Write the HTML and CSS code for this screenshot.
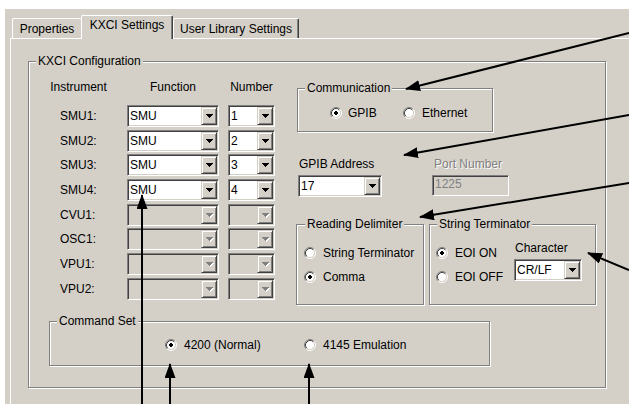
FILE: index.html
```html
<!DOCTYPE html>
<html>
<head>
<meta charset="utf-8">
<title>KXCI Settings</title>
<link rel="stylesheet" href="styles.css">
</head>
<body>
<div class="dialog">
  <div class="tabs">
    <div class="tab t1">Properties</div>
    <div class="tab t2 active">KXCI Settings</div>
    <div class="tab t3">User Library Settings</div>
  </div>
  <div class="panel">
    <div class="group kxci">
      <div class="gtitle">KXCI Configuration</div>
      <div class="kxci-main">
        <div class="inst">
          <div class="hd hd-inst">Instrument</div>
          <div class="hd hd-func">Function</div>
          <div class="hd hd-num">Number</div>

          <div class="lbl">SMU1:</div>
          <div class="combo func"><span class="val">SMU</span><span class="btn"><svg width="7" height="4" viewBox="0 0 7 4"><path d="M0 0h7v1h-1v1h-1v1h-1v1h-1v-1h-1v-1h-1v-1h-1z"/></svg></span></div>
          <div class="combo num"><span class="val">1</span><span class="btn"><svg width="7" height="4" viewBox="0 0 7 4"><path d="M0 0h7v1h-1v1h-1v1h-1v1h-1v-1h-1v-1h-1v-1h-1z"/></svg></span></div>

          <div class="lbl">SMU2:</div>
          <div class="combo func"><span class="val">SMU</span><span class="btn"><svg width="7" height="4" viewBox="0 0 7 4"><path d="M0 0h7v1h-1v1h-1v1h-1v1h-1v-1h-1v-1h-1v-1h-1z"/></svg></span></div>
          <div class="combo num"><span class="val">2</span><span class="btn"><svg width="7" height="4" viewBox="0 0 7 4"><path d="M0 0h7v1h-1v1h-1v1h-1v1h-1v-1h-1v-1h-1v-1h-1z"/></svg></span></div>

          <div class="lbl">SMU3:</div>
          <div class="combo func"><span class="val">SMU</span><span class="btn"><svg width="7" height="4" viewBox="0 0 7 4"><path d="M0 0h7v1h-1v1h-1v1h-1v1h-1v-1h-1v-1h-1v-1h-1z"/></svg></span></div>
          <div class="combo num"><span class="val">3</span><span class="btn"><svg width="7" height="4" viewBox="0 0 7 4"><path d="M0 0h7v1h-1v1h-1v1h-1v1h-1v-1h-1v-1h-1v-1h-1z"/></svg></span></div>

          <div class="lbl">SMU4:</div>
          <div class="combo func"><span class="val">SMU</span><span class="btn"><svg width="7" height="4" viewBox="0 0 7 4"><path d="M0 0h7v1h-1v1h-1v1h-1v1h-1v-1h-1v-1h-1v-1h-1z"/></svg></span></div>
          <div class="combo num"><span class="val">4</span><span class="btn"><svg width="7" height="4" viewBox="0 0 7 4"><path d="M0 0h7v1h-1v1h-1v1h-1v1h-1v-1h-1v-1h-1v-1h-1z"/></svg></span></div>

          <div class="lbl">CVU1:</div>
          <div class="combo func disabled"><span class="val"></span><span class="btn"><svg width="8" height="5" viewBox="0 0 8 5"><path class="sh" d="M1 1h7v1h-1v1h-1v1h-1v1h-1v-1h-1v-1h-1v-1h-1z"/><path class="ar" d="M0 0h7v1h-1v1h-1v1h-1v1h-1v-1h-1v-1h-1v-1h-1z"/></svg></span></div>
          <div class="combo num disabled"><span class="val"></span><span class="btn"><svg width="8" height="5" viewBox="0 0 8 5"><path class="sh" d="M1 1h7v1h-1v1h-1v1h-1v1h-1v-1h-1v-1h-1v-1h-1z"/><path class="ar" d="M0 0h7v1h-1v1h-1v1h-1v1h-1v-1h-1v-1h-1v-1h-1z"/></svg></span></div>

          <div class="lbl">OSC1:</div>
          <div class="combo func disabled"><span class="val"></span><span class="btn"><svg width="8" height="5" viewBox="0 0 8 5"><path class="sh" d="M1 1h7v1h-1v1h-1v1h-1v1h-1v-1h-1v-1h-1v-1h-1z"/><path class="ar" d="M0 0h7v1h-1v1h-1v1h-1v1h-1v-1h-1v-1h-1v-1h-1z"/></svg></span></div>
          <div class="combo num disabled"><span class="val"></span><span class="btn"><svg width="8" height="5" viewBox="0 0 8 5"><path class="sh" d="M1 1h7v1h-1v1h-1v1h-1v1h-1v-1h-1v-1h-1v-1h-1z"/><path class="ar" d="M0 0h7v1h-1v1h-1v1h-1v1h-1v-1h-1v-1h-1v-1h-1z"/></svg></span></div>

          <div class="lbl">VPU1:</div>
          <div class="combo func disabled"><span class="val"></span><span class="btn"><svg width="8" height="5" viewBox="0 0 8 5"><path class="sh" d="M1 1h7v1h-1v1h-1v1h-1v1h-1v-1h-1v-1h-1v-1h-1z"/><path class="ar" d="M0 0h7v1h-1v1h-1v1h-1v1h-1v-1h-1v-1h-1v-1h-1z"/></svg></span></div>
          <div class="combo num disabled"><span class="val"></span><span class="btn"><svg width="8" height="5" viewBox="0 0 8 5"><path class="sh" d="M1 1h7v1h-1v1h-1v1h-1v1h-1v-1h-1v-1h-1v-1h-1z"/><path class="ar" d="M0 0h7v1h-1v1h-1v1h-1v1h-1v-1h-1v-1h-1v-1h-1z"/></svg></span></div>

          <div class="lbl">VPU2:</div>
          <div class="combo func disabled"><span class="val"></span><span class="btn"><svg width="8" height="5" viewBox="0 0 8 5"><path class="sh" d="M1 1h7v1h-1v1h-1v1h-1v1h-1v-1h-1v-1h-1v-1h-1z"/><path class="ar" d="M0 0h7v1h-1v1h-1v1h-1v1h-1v-1h-1v-1h-1v-1h-1z"/></svg></span></div>
          <div class="combo num disabled"><span class="val"></span><span class="btn"><svg width="8" height="5" viewBox="0 0 8 5"><path class="sh" d="M1 1h7v1h-1v1h-1v1h-1v1h-1v-1h-1v-1h-1v-1h-1z"/><path class="ar" d="M0 0h7v1h-1v1h-1v1h-1v1h-1v-1h-1v-1h-1v-1h-1z"/></svg></span></div>
        </div>

        <div class="right">
          <div class="group comm">
            <div class="gtitle">Communication</div>
            <div class="comm-radios">
              <div class="radio r-gpib"><svg class="rb" width="12" height="12" viewBox="0 0 12 12"><circle cx="6" cy="6" r="4.5" fill="#fff"/><path d="M2.11 9.89A5.5 5.5 0 0 1 9.89 2.11" fill="none" stroke="#808080"/><path d="M9.89 2.11A5.5 5.5 0 0 1 2.11 9.89" fill="none" stroke="#fff"/><path d="M2.82 9.18A4.5 4.5 0 0 1 9.18 2.82" fill="none" stroke="#404040"/><path d="M9.18 2.82A4.5 4.5 0 0 1 2.82 9.18" fill="none" stroke="#d4d0c8"/><path d="M5 4h2v1h1v2h-1v1h-2v-1h-1v-2h1z"/></svg><span>GPIB</span></div>
              <div class="radio"><svg class="rb" width="12" height="12" viewBox="0 0 12 12"><circle cx="6" cy="6" r="4.5" fill="#fff"/><path d="M2.11 9.89A5.5 5.5 0 0 1 9.89 2.11" fill="none" stroke="#808080"/><path d="M9.89 2.11A5.5 5.5 0 0 1 2.11 9.89" fill="none" stroke="#fff"/><path d="M2.82 9.18A4.5 4.5 0 0 1 9.18 2.82" fill="none" stroke="#404040"/><path d="M9.18 2.82A4.5 4.5 0 0 1 2.82 9.18" fill="none" stroke="#d4d0c8"/></svg><span>Ethernet</span></div>
            </div>
          </div>

          <div class="addr-row">
            <div class="addr-col gpib-col">
              <div class="flabel">GPIB Address</div>
              <div class="combo gpib"><span class="val">17</span><span class="btn"><svg width="7" height="4" viewBox="0 0 7 4"><path d="M0 0h7v1h-1v1h-1v1h-1v1h-1v-1h-1v-1h-1v-1h-1z"/></svg></span></div>
            </div>
            <div class="addr-col port-col">
              <div class="flabel dis">Port Number</div>
              <div class="textbox disabled">1225</div>
            </div>
          </div>

          <div class="delims">
            <div class="group rd">
              <div class="gtitle">Reading Delimiter</div>
              <div class="radio-col">
                <div class="radio"><svg class="rb" width="12" height="12" viewBox="0 0 12 12"><circle cx="6" cy="6" r="4.5" fill="#fff"/><path d="M2.11 9.89A5.5 5.5 0 0 1 9.89 2.11" fill="none" stroke="#808080"/><path d="M9.89 2.11A5.5 5.5 0 0 1 2.11 9.89" fill="none" stroke="#fff"/><path d="M2.82 9.18A4.5 4.5 0 0 1 9.18 2.82" fill="none" stroke="#404040"/><path d="M9.18 2.82A4.5 4.5 0 0 1 2.82 9.18" fill="none" stroke="#d4d0c8"/></svg><span>String Terminator</span></div>
                <div class="radio"><svg class="rb" width="12" height="12" viewBox="0 0 12 12"><circle cx="6" cy="6" r="4.5" fill="#fff"/><path d="M2.11 9.89A5.5 5.5 0 0 1 9.89 2.11" fill="none" stroke="#808080"/><path d="M9.89 2.11A5.5 5.5 0 0 1 2.11 9.89" fill="none" stroke="#fff"/><path d="M2.82 9.18A4.5 4.5 0 0 1 9.18 2.82" fill="none" stroke="#404040"/><path d="M9.18 2.82A4.5 4.5 0 0 1 2.82 9.18" fill="none" stroke="#d4d0c8"/><path d="M5 4h2v1h1v2h-1v1h-2v-1h-1v-2h1z"/></svg><span>Comma</span></div>
              </div>
            </div>
            <div class="group st">
              <div class="gtitle">String Terminator</div>
              <div class="st-body">
                <div class="radio-col eoi">
                  <div class="radio"><svg class="rb" width="12" height="12" viewBox="0 0 12 12"><circle cx="6" cy="6" r="4.5" fill="#fff"/><path d="M2.11 9.89A5.5 5.5 0 0 1 9.89 2.11" fill="none" stroke="#808080"/><path d="M9.89 2.11A5.5 5.5 0 0 1 2.11 9.89" fill="none" stroke="#fff"/><path d="M2.82 9.18A4.5 4.5 0 0 1 9.18 2.82" fill="none" stroke="#404040"/><path d="M9.18 2.82A4.5 4.5 0 0 1 2.82 9.18" fill="none" stroke="#d4d0c8"/><path d="M5 4h2v1h1v2h-1v1h-2v-1h-1v-2h1z"/></svg><span>EOI ON</span></div>
                  <div class="radio"><svg class="rb" width="12" height="12" viewBox="0 0 12 12"><circle cx="6" cy="6" r="4.5" fill="#fff"/><path d="M2.11 9.89A5.5 5.5 0 0 1 9.89 2.11" fill="none" stroke="#808080"/><path d="M9.89 2.11A5.5 5.5 0 0 1 2.11 9.89" fill="none" stroke="#fff"/><path d="M2.82 9.18A4.5 4.5 0 0 1 9.18 2.82" fill="none" stroke="#404040"/><path d="M9.18 2.82A4.5 4.5 0 0 1 2.82 9.18" fill="none" stroke="#d4d0c8"/></svg><span>EOI OFF</span></div>
                </div>
                <div class="char-col">
                  <div class="flabel">Character</div>
                  <div class="combo crlf"><span class="val">CR/LF</span><span class="btn"><svg width="7" height="4" viewBox="0 0 7 4"><path d="M0 0h7v1h-1v1h-1v1h-1v1h-1v-1h-1v-1h-1v-1h-1z"/></svg></span></div>
                </div>
              </div>
            </div>
          </div>
        </div>
      </div>

      <div class="group cmdset">
        <div class="gtitle">Command Set</div>
        <div class="cmd-radios">
          <div class="radio r-4200"><svg class="rb" width="12" height="12" viewBox="0 0 12 12"><circle cx="6" cy="6" r="4.5" fill="#fff"/><path d="M2.11 9.89A5.5 5.5 0 0 1 9.89 2.11" fill="none" stroke="#808080"/><path d="M9.89 2.11A5.5 5.5 0 0 1 2.11 9.89" fill="none" stroke="#fff"/><path d="M2.82 9.18A4.5 4.5 0 0 1 9.18 2.82" fill="none" stroke="#404040"/><path d="M9.18 2.82A4.5 4.5 0 0 1 2.82 9.18" fill="none" stroke="#d4d0c8"/><path d="M5 4h2v1h1v2h-1v1h-2v-1h-1v-2h1z"/></svg><span>4200 (Normal)</span></div>
          <div class="radio"><svg class="rb" width="12" height="12" viewBox="0 0 12 12"><circle cx="6" cy="6" r="4.5" fill="#fff"/><path d="M2.11 9.89A5.5 5.5 0 0 1 9.89 2.11" fill="none" stroke="#808080"/><path d="M9.89 2.11A5.5 5.5 0 0 1 2.11 9.89" fill="none" stroke="#fff"/><path d="M2.82 9.18A4.5 4.5 0 0 1 9.18 2.82" fill="none" stroke="#404040"/><path d="M9.18 2.82A4.5 4.5 0 0 1 2.82 9.18" fill="none" stroke="#d4d0c8"/></svg><span>4145 Emulation</span></div>
        </div>
      </div>
    </div>
  </div>
</div>

<svg class="arrows" width="629" height="404" viewBox="0 0 629 404">
  <defs>
    <marker id="ah" markerUnits="userSpaceOnUse" markerWidth="16" markerHeight="11" refX="14" refY="5.5" orient="auto">
      <path d="M0 0L15 5.5L0 11z" fill="#000"/>
    </marker>
  </defs>
  <g stroke="#000" stroke-width="2" fill="none" marker-end="url(#ah)">
    <line x1="629" y1="33" x2="406" y2="89"/>
    <line x1="629" y1="115" x2="404" y2="155"/>
    <line x1="629" y1="183" x2="420" y2="217"/>
    <line x1="629" y1="270" x2="588" y2="253"/>
    <line x1="142" y1="404" x2="142" y2="195"/>
    <line x1="170" y1="404" x2="170" y2="364"/>
    <line x1="309" y1="404" x2="309" y2="364"/>
  </g>
</svg>
</body>
</html>
```

FILE: styles.css
```css
* { box-sizing: border-box; }

html, body {
  margin: 0;
  padding: 0;
  background: #fff;
}

body {
  position: relative;
  width: 629px;
  height: 404px;
  overflow: hidden;
  padding: 9px 0 0 5px;
  font-family: "Liberation Sans", Arial, sans-serif;
  font-size: 12px;
  line-height: 14px;
  color: #000;
}

.dialog {
  background: #d4d0c8;
  height: 395px;
}

/* ---------- tabs ---------- */
.tabs {
  display: flex;
  align-items: flex-end;
  height: 29px;
  padding-left: 7px;
}

.tab {
  height: 20px;
  padding-top: 3px;
  text-align: center;
  background: #d4d0c8;
  border-top: 1px solid #fff;
  border-left: 1px solid #fff;
  border-right: 1px solid #404040;
  box-shadow: inset -1px 0 0 #808080;
  border-top-left-radius: 2px;
  border-top-right-radius: 2px;
  white-space: nowrap;
}

.t1 { width: 69px; border-right: none; box-shadow: none; }
.t3 { width: 126px; }

.tab.active {
  width: 92px;
  height: 24px;
  padding-top: 2px;
  margin-bottom: -1px;
  position: relative;
  z-index: 1;
}

/* ---------- panel ---------- */
.panel {
  margin-left: 5px;
  border-top: 1px solid #fff;
  border-left: 1px solid #fff;
  height: 366px;
  padding: 22px 0 0 17px;
}

/* ---------- group boxes ---------- */
.group {
  border: 1px solid #808080;
  box-shadow: 1px 1px 0 #fff, inset 1px 1px 0 #fff;
}

.gtitle {
  width: max-content;
  height: 14px;
  margin-top: -8px;
  margin-left: 7px;
  padding: 0 2px;
  background: #d4d0c8;
  white-space: nowrap;
}

.kxci {
  width: 578px;
  height: 327px;
}

.kxci-main {
  display: flex;
  align-items: flex-start;
  padding-left: 21px;
}

/* ---------- instrument table ---------- */
.inst {
  margin-top: 12px;
  display: grid;
  grid-template-columns: 77px 101px 47px;
  grid-template-rows: 23px 25px 25px 24px 25px 25px 24px 25px 25px;
  align-items: center;
}

.hd {
  align-self: start;
  text-align: center;
  white-space: nowrap;
}
.hd-inst { width: 57px; }
.hd-func { width: 92px; }
.hd-num { width: 47px; }

.lbl { padding-left: 10px; }

/* ---------- combos ---------- */
.combo {
  display: flex;
  height: 22px;
  padding: 1px;
  background: #fff;
  border: 1px solid;
  border-color: #808080 #fff #fff #808080;
  box-shadow: inset 1px 1px 0 #404040, inset -1px -1px 0 #d4d0c8;
}

.combo .val {
  flex: 1;
  padding-left: 1px;
  line-height: 18px;
  white-space: nowrap;
  overflow: hidden;
}

.combo .btn {
  width: 16px;
  display: flex;
  align-items: center;
  justify-content: center;
  background: #d4d0c8;
  border: 1px solid;
  border-color: #d4d0c8 #404040 #404040 #d4d0c8;
  box-shadow: inset 1px 1px 0 #fff, inset -1px -1px 0 #808080;
}

.combo .btn svg { display: block; }
.combo .btn path { fill: #000; }

.combo.disabled { background: #d4d0c8; }
.combo.disabled .btn svg { margin: 1px 0 0 1px; }
.combo.disabled .btn .ar { fill: #808080; }
.combo.disabled .btn .sh { fill: #fff; }

.func { width: 92px; }
.num { width: 47px; }
.gpib { width: 84px; margin-left: 2px; margin-top: 4px; }
.crlf { width: 68px; margin-top: 4px; }

.textbox {
  width: 77px;
  height: 21px;
  margin-top: 4px;
  padding-left: 2px;
  line-height: 17px;
  border: 1px solid;
  border-color: #808080 #fff #fff #808080;
  box-shadow: inset 1px 1px 0 #404040, inset -1px -1px 0 #d4d0c8;
}
.textbox.disabled {
  background: #d4d0c8;
  color: #808080;
}

/* ---------- right column ---------- */
.right {
  margin-left: 21px;
  margin-top: 20px;
  display: flex;
  flex-direction: column;
}

.comm {
  width: 196px;
  height: 44px;
  margin-left: 1px;
}

.radio {
  display: flex;
  align-items: center;
  gap: 7px;
  height: 14px;
  white-space: nowrap;
}
.radio .rb { display: block; flex: none; }

.comm-radios {
  display: flex;
  margin-top: 11px;
  padding-left: 32px;
}
.r-gpib { width: 73px; gap: 6px; }

.addr-row {
  display: flex;
  margin-top: 25px;
}
.gpib-col { width: 136px; }
.gpib-col .flabel { padding-left: 3px; }
.port-col .flabel { padding-left: 2px; }

.flabel { height: 14px; white-space: nowrap; }
.flabel.dis {
  color: #808080;
  text-shadow: 1px 1px 0 #fff;
}

.delims {
  display: flex;
  gap: 5px;
  margin-top: 27px;
}

.rd { width: 128px; height: 81px; }
.rd .gtitle { margin-left: 8px; }
.st { width: 167px; height: 81px; }

.radio-col {
  display: flex;
  flex-direction: column;
  gap: 10px;
  margin-top: 15px;
  padding-left: 7px;
}

.st-body { display: flex; }
.eoi { width: 84px; padding-left: 6px; }

.char-col {
  margin-top: 10px;
}
.char-col .flabel { padding-left: 1px; }

/* ---------- command set ---------- */
.cmdset {
  width: 441px;
  height: 45px;
  margin: 16px 0 0 20px;
}

.cmd-radios {
  display: flex;
  margin-top: 10px;
  padding-left: 115px;
}
.r-4200 { width: 139px; }

/* ---------- annotation arrows ---------- */
.arrows {
  position: absolute;
  left: 0;
  top: 0;
  z-index: 5;
  pointer-events: none;
}
```
